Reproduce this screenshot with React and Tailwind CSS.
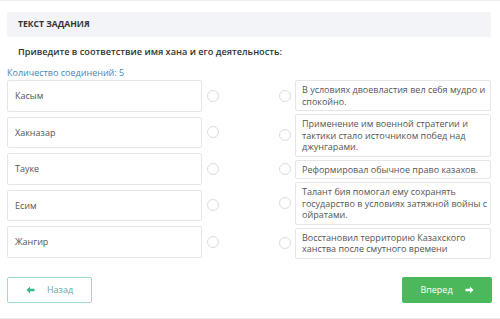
import React from 'react';

const khans = ['Касым', 'Хакназар', 'Тауке', 'Есим', 'Жангир'];

const deeds = [
  ['В условиях двоевластия вел себя мудро и', 'спокойно.'],
  ['Применение им военной стратегии и', 'тактики стало источником побед над', 'джунгарами.'],
  ['Реформировал обычное право казахов.'],
  ['Талант бия помогал ему сохранять', 'государство в условиях затяжной войны с', 'ойратами.'],
  ['Восстановил территорию Казахского', 'ханства после смутного времени'],
];

const Dot = () => (
  <div className="w-[12px] h-[12px] rounded-full border border-[#dcdcdc] bg-white flex-shrink-0" />
);

const App = () => {
  return (
    <div
      className="w-[500px] h-[319px] bg-white border-t border-b border-[#ececec] overflow-hidden text-[#555]"
      style={{ fontFamily: '"Open Sans", "Noto Sans", sans-serif' }}
    >
      {/* Header */}
      <div className="mx-[7px] mt-[11px] h-[25px] bg-[#f3f4f7] rounded-[2px] flex items-center pl-[11px] w-[484px]">
        <span className="text-[8.6px] font-bold text-[#333]">ТЕКСТ ЗАДАНИЯ</span>
      </div>

      <p className="pl-[18px] mt-[8px] text-[9.2px] font-semibold text-[#333] leading-[14px]">
        Приведите в соответствие имя хана и его деятельность:
      </p>

      <p className="pl-[7px] mt-[8px] text-[9px] text-[#3f86b9] leading-[12px]">
        Количество соединений: 5
      </p>

      {/* Matching */}
      <div className="flex pl-[7px] mt-[1px] gap-[60px]">
        <div className="w-[212px] flex flex-col gap-[5px]">
          {khans.map((k) => (
            <div key={k} className="flex items-center">
              <div className="w-[195px] h-[31.5px] border border-[#e6e6e6] rounded-[2px] flex items-center pl-[7px] text-[9px] flex-shrink-0">
                {k}
              </div>
              <div className="ml-[5px]">
                <Dot />
              </div>
            </div>
          ))}
        </div>

        <div className="w-[212px] flex flex-col gap-[3px]">
          {deeds.map((d, i) => (
            <div key={i} className="flex items-center">
              <Dot />
              <div className="ml-[4px] w-[196px] flex-shrink-0 border border-[#e6e6e6] rounded-[2px] px-[6px] py-[3px] text-[9px] leading-[11.5px] whitespace-nowrap">
                {d.map((line) => (
                  <div key={line}>{line}</div>
                ))}
              </div>
            </div>
          ))}
        </div>
      </div>

      {/* Navigation */}
      <div className="flex justify-between pl-[7px] pr-[8px] mt-[18px]">
        <button className="w-[85px] h-[26px] border border-[#9fd9cf] rounded-[2px] flex items-center justify-center gap-[12px] text-[9px] text-[#6aa9a0]">
          <svg width="9" height="8" viewBox="0 0 10 9">
            <path d="M4.5 0.5 L0.5 4.5 L4.5 8.5 L4.5 6 L9.5 6 L9.5 3 L4.5 3 Z" fill="#3bb48f" />
          </svg>
          Назад
        </button>
        <button className="w-[90px] h-[26px] bg-[#4cb85c] rounded-[2px] flex items-center justify-center gap-[12px] text-[9px] text-white">
          Вперед
          <svg width="9" height="8" viewBox="0 0 10 9">
            <path d="M5.5 0.5 L9.5 4.5 L5.5 8.5 L5.5 6 L0.5 6 L0.5 3 L5.5 3 Z" fill="#fff" />
          </svg>
        </button>
      </div>
    </div>
  );
};

export default App;
